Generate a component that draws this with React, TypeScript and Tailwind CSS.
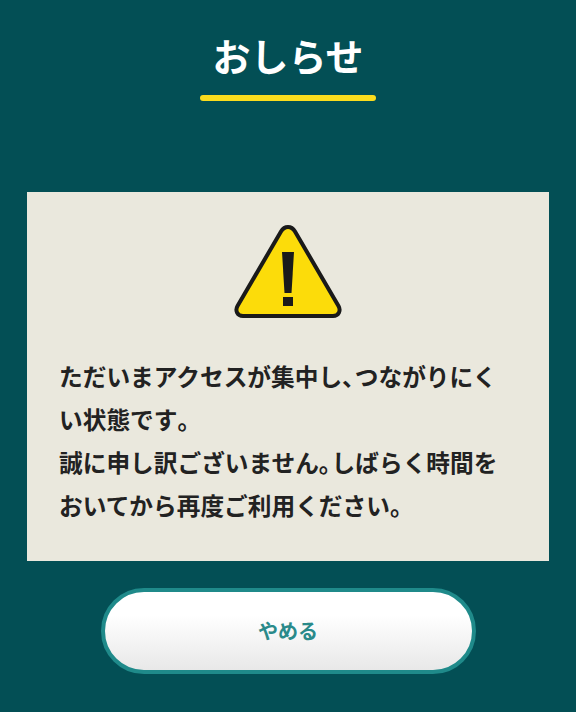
import React from 'react';

const font = { fontFamily: '"Noto Sans CJK JP", sans-serif' };

const WarningIcon = () => (
  <svg width="110" height="96" viewBox="0 0 110 96" className="block">
    <path
      d="M55 4 C51.500 4 49.500 6 48 8.500 L4.500 83 C2 87.500 4 93 10 93 L100 93 C106 93 108 87.500 105.500 83 L62 8.500 C60.500 6 58.500 4 55 4 Z"
      fill="#fcdc0a"
      stroke="#1a1a1a"
      strokeWidth="4"
      strokeLinejoin="round"
    />
    <path d="M49 29 L61 29 L58.500 70 L51.500 70 Z" fill="#1a1a1a" />
    <rect x="50" y="74" width="10" height="9" fill="#1a1a1a" />
  </svg>
);

// the reference sets punctuation half width
const Punct = ({ children }: { children: string }) => (
  <span className="tracking-[-11px]">{children}</span>
);

export default function App() {
  return (
    <div
      className="w-[576px] h-[712px] bg-[#034f55] flex flex-col items-center overflow-hidden"
      style={font}
    >
      <h1 className="mt-[29px] h-[52px] leading-[52px] text-[38px] font-bold text-white">おしらせ</h1>
      <div className="mt-[14px] w-[176px] h-[6px] rounded-full bg-[#fbdc1e]" />

      <div className="mt-[91px] w-[522px] h-[369px] bg-[#eae8dd] flex flex-col items-center pt-[31px]">
        <WarningIcon />
        <p className="mt-[36px] self-start pl-[32px] text-[23.7px] leading-[43px] font-bold text-[#222222] whitespace-nowrap">
          ただいまアクセスが集中し<Punct>、</Punct>つながりにく
          <br />
          い状態です<Punct>。</Punct>
          <br />
          誠に申し訳ございません<Punct>。</Punct>しばらく時間を
          <br />
          おいてから再度ご利用ください<Punct>。</Punct>
        </p>
      </div>

      <button className="mt-[27px] w-[375px] h-[86px] rounded-full border-[4px] border-[#1f8a8a] bg-gradient-to-b from-white from-30% to-[#e8e8e8] text-[20px] font-bold text-[#2a8a8a]">
        やめる
      </button>
    </div>
  );
}
